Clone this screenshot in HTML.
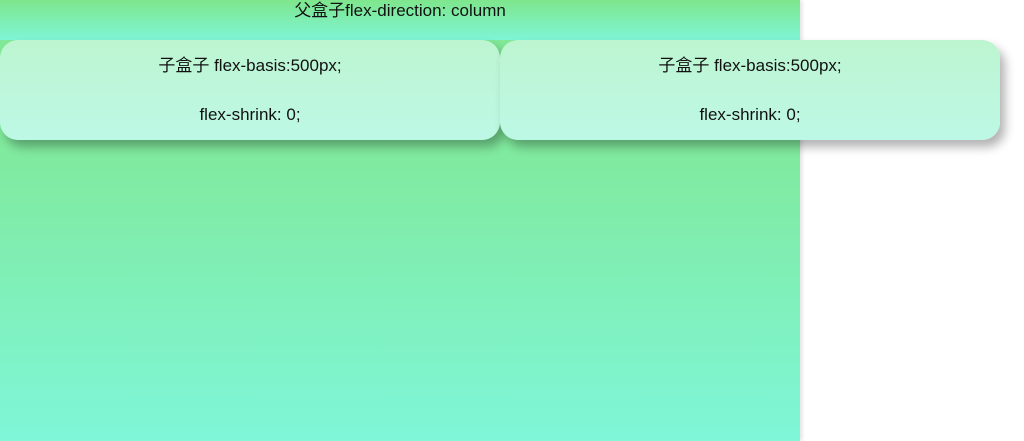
<!DOCTYPE html>
<html><head><meta charset="utf-8"><style>
html,body{margin:0;padding:0;background:#fff;width:1024px;height:441px;overflow:hidden}
body{font-family:"Liberation Sans","Noto Sans CJK SC",sans-serif;font-size:17px;color:#111}
.parent{position:absolute;left:0;top:0;width:800px;height:441px;background:linear-gradient(#80e895 0%,#80e99a 30%,#7ff6d8 100%);box-shadow:2px 0 4px rgba(0,0,0,0.12)}
.head{position:absolute;left:0;top:0;width:800px;height:40px;background:linear-gradient(#7ee68c,#7ef5d6);text-align:center;line-height:21px}
.c{position:absolute;top:40px;width:500px;height:100px;border-radius:18px;background:linear-gradient(#bdf5d0,#bdf8e6);box-shadow:5px 7px 10px rgba(0,0,0,0.3);text-align:center}
.c div{position:absolute;left:0;right:0;line-height:21px}
</style></head><body>
<div class="parent">
<div class="head">父盒子flex-direction: column</div>
</div>
<div class="c" style="left:0"><div style="top:15px">子盒子 flex-basis:500px;</div><div style="top:64px">flex-shrink: 0;</div></div>
<div class="c" style="left:500px"><div style="top:15px">子盒子 flex-basis:500px;</div><div style="top:64px">flex-shrink: 0;</div></div>
</body></html>
